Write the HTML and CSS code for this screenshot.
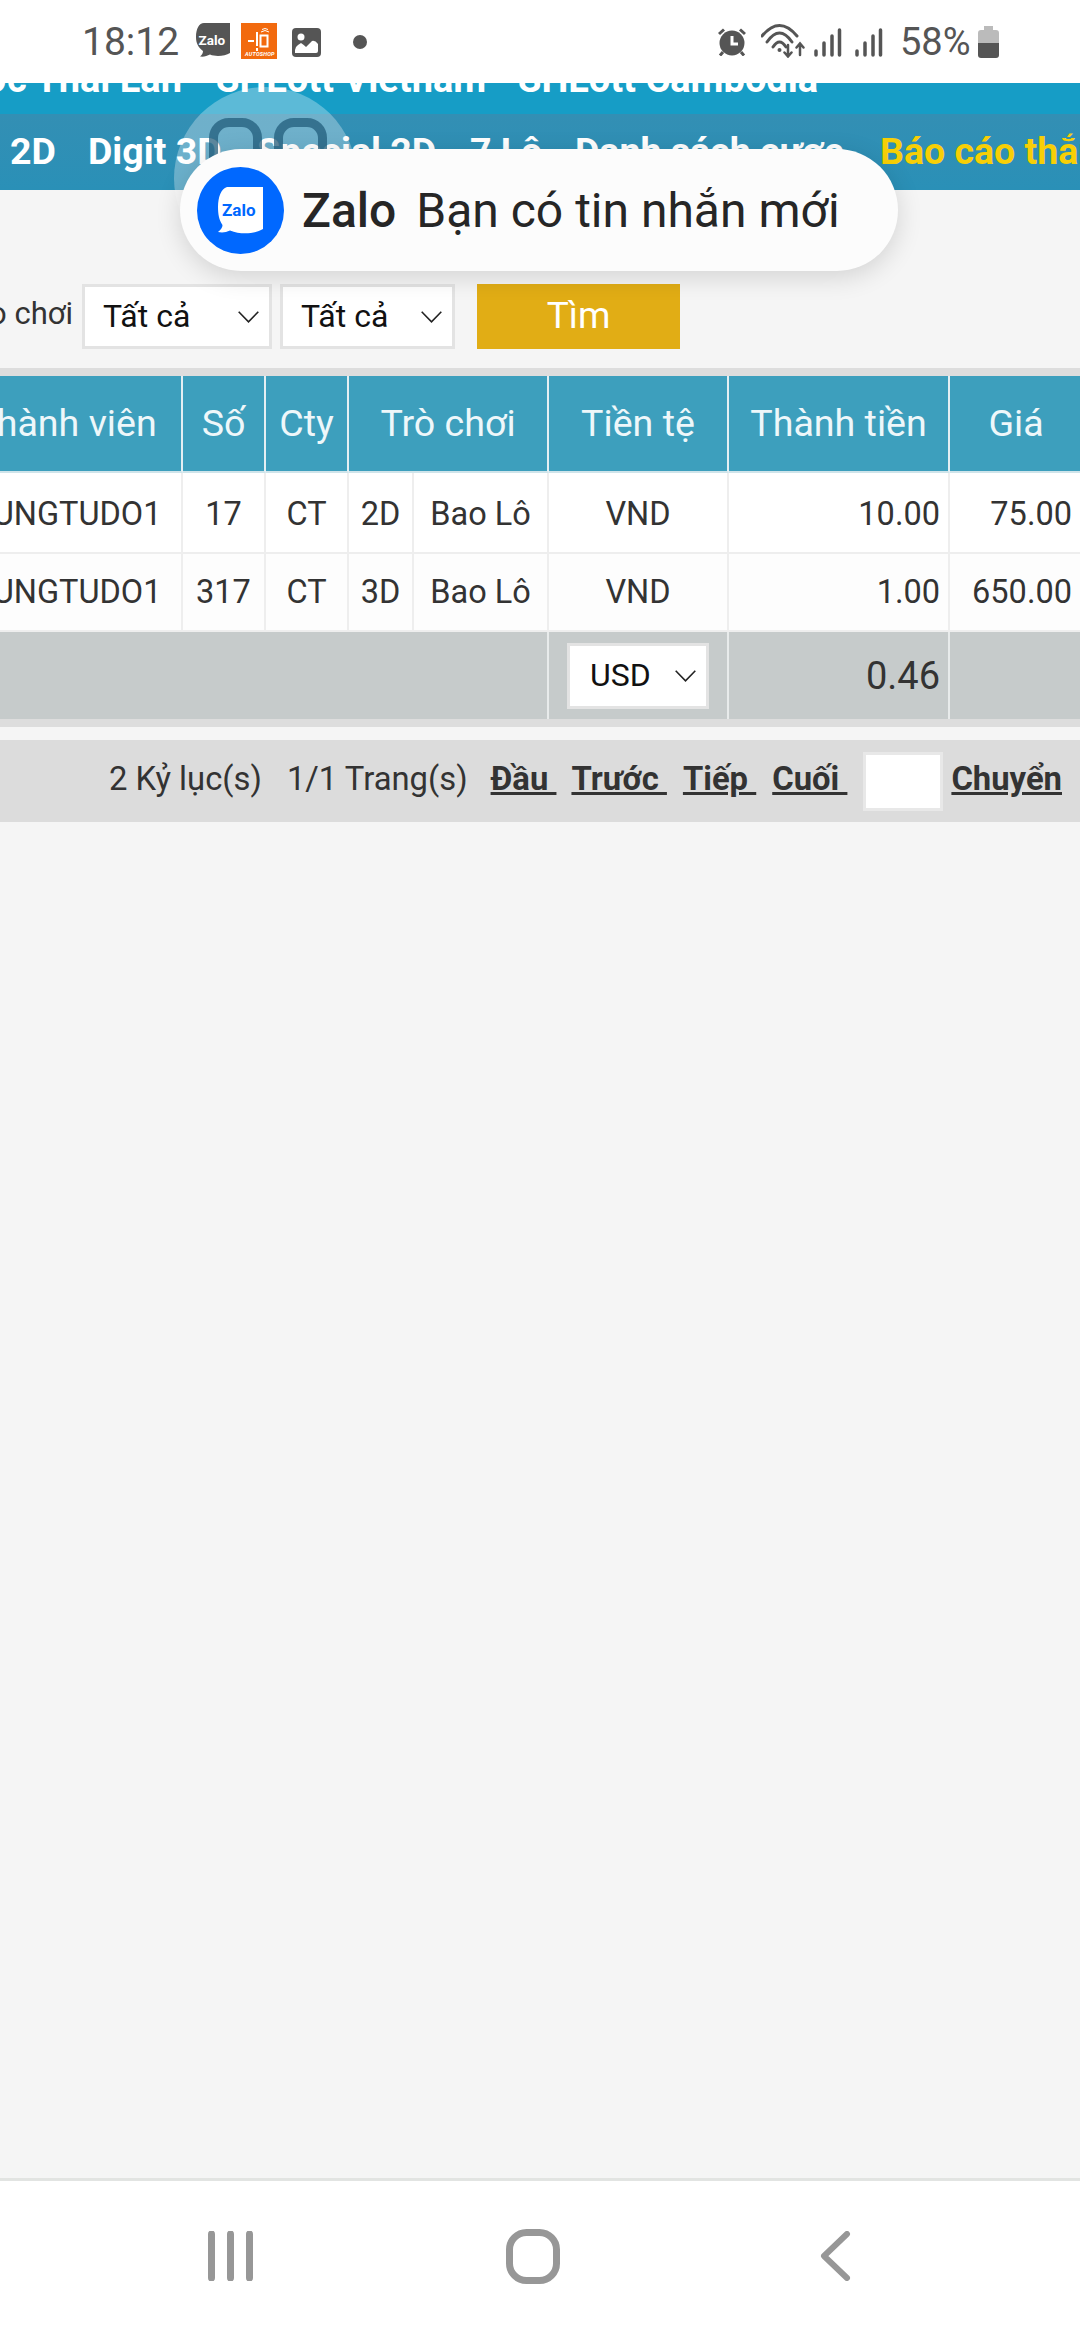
FILE: index.html
```html
<!DOCTYPE html>
<html lang="vi">
<head>
<meta charset="utf-8">
<title>Báo cáo thắng thua</title>
<link rel="stylesheet" href="styles.css">
</head>
<body>
<div class="screen">
  <header class="status">
    <span class="time">18:12</span>
    <svg class="ic-zalo" width="34" height="34" viewBox="0 0 34 34"><path fill="#555" d="M8 0H34V30C29 33 20 34 14 31.500C11 33 8 34 4 33.500C6 32 7 30 7 28C2 24 0 20 0 14C0 6 3 0 8 0Z"/><text x="2.500" y="21.500" class="t-zalo-s">Zalo</text></svg>
    <svg class="ic-auto" width="36" height="36" viewBox="0 0 36 36"><rect width="36" height="36" fill="#f26a0e"/><g stroke="#fff" fill="none"><path stroke-width="2" d="M7 18H13M16 9V23M16 25V28"/><rect x="19.500" y="12.500" width="7" height="11" stroke-width="2"/><path stroke-width="1" d="M20 9Q24 6 28 9M21 6.500Q24 4.500 27 6.500"/></g><text x="4" y="33" class="t-auto">AUTOSHOP</text></svg>
    <svg class="ic-img" width="29" height="29" viewBox="0 0 29 29"><rect width="29" height="29" rx="4" fill="#555"/><circle cx="9" cy="9" r="3.500" fill="#fff"/><path fill="#fff" d="M3 25V22Q3 19 6 17L9 15Q12 17 14 19L20 13Q23 12 26 16V23Q26 25 24 25Z"/></svg>
    <span class="dot"></span>
    <div class="status-right">
      <svg class="ic-alarm" width="30" height="28" viewBox="0 0 30 28"><g stroke="#555" stroke-width="3" fill="none"><path d="M2 6L7 1.500M23 1.500L28 6M6 24L3 27.500M24 24L27 27.500"/></g><circle cx="15" cy="15" r="12.500" fill="#555"/><path d="M15 8V16H21" stroke="#fff" stroke-width="3" fill="none"/></svg>
      <svg class="ic-wifi" width="44" height="34" viewBox="0 0 44 34"><g stroke="#555" fill="none" stroke-linecap="round"><path stroke-width="3" d="M1 12Q18.500 -9 36 12M6 18Q18.500 0 31 18M12 23Q18.500 13 25 23"/><path stroke-width="2.500" d="M27 21V32M23.500 28.500L27 32.500L30.500 28.500M39 31V20M35.500 23.500L39 19.500L42.500 23.500"/></g><circle cx="18.500" cy="26" r="2" fill="#555"/></svg>
      <svg class="ic-sig" width="28" height="29" viewBox="0 0 28 29"><path stroke="#555" stroke-width="3.500" stroke-linecap="round" d="M2 23V27M10 15V27M18 8V27M25.500 2V27"/></svg>
      <svg class="ic-sig ic-sig2" width="28" height="29" viewBox="0 0 28 29"><path stroke="#555" stroke-width="3.500" stroke-linecap="round" d="M2 23V27M10 15V27M18 8V27M25.500 2V27"/></svg>
      <span class="pct">58%</span>
      <svg class="ic-batt" width="21" height="32" viewBox="0 0 21 32"><path fill="#bbb" d="M6 0H15V4H18Q21 4 21 7V17H0V7Q0 4 3 4H6Z"/><path fill="#555" d="M0 17H21V29Q21 32 18 32H3Q0 32 0 29Z"/></svg>
    </div>
  </header>

  <main class="page">
    <nav class="menu-top">
      <span class="mt-a">Cược Thái Lan</span>
      <span class="mt-b">SHLott Vietnam</span>
      <span class="mt-c">SHLott Cambodia</span>
    </nav>
    <nav class="menu-main">
      <span class="mm-1">2D</span>
      <span class="mm-2">Digit 3D</span>
      <span class="mm-3">Special 2D</span>
      <span class="mm-4">7 Lô</span>
      <span class="mm-5">Danh sách cược</span>
      <span class="mm-6 active">Báo cáo thắng thua</span>
    </nav>

    <section class="filter">
      <div class="f-label"><span>Trò chơi</span></div>
      <div class="select sel-1"><span>Tất cả</span><svg class="chev" width="21" height="12" viewBox="0 0 21 12"><path d="M.7.7L10.500 10.800L20.300.7" fill="none" stroke="#222" stroke-width="1.600"/></svg></div>
      <div class="select sel-2"><span>Tất cả</span><svg class="chev" width="21" height="12" viewBox="0 0 21 12"><path d="M.7.7L10.500 10.800L20.300.7" fill="none" stroke="#222" stroke-width="1.600"/></svg></div>
      <button class="btn-find">Tìm</button>
    </section>

    <div class="table-wrap">
      <table class="report">
        <colgroup>
          <col class="c1"><col class="c2"><col class="c3"><col class="c4"><col class="c5"><col class="c6"><col class="c7"><col class="c8">
        </colgroup>
        <thead>
          <tr>
            <th>Thành viên</th><th>Số</th><th>Cty</th><th colspan="2">Trò chơi</th><th>Tiền tệ</th><th>Thành tiền</th><th>Giá</th>
          </tr>
        </thead>
        <tbody>
          <tr class="r1">
            <td>HUNGTUDO1</td><td>17</td><td>CT</td><td>2D</td><td>Bao Lô</td><td>VND</td><td class="num">10.00</td><td class="num">75.00</td>
          </tr>
          <tr class="r2">
            <td>HUNGTUDO1</td><td>317</td><td>CT</td><td>3D</td><td>Bao Lô</td><td>VND</td><td class="num">1.00</td><td class="num">650.00</td>
          </tr>
        </tbody>
        <tfoot>
          <tr>
            <td colspan="5"></td>
            <td><div class="select sel-cur"><span>USD</span><svg class="chev" width="21" height="12" viewBox="0 0 21 12"><path d="M.7.7L10.500 10.800L20.300.7" fill="none" stroke="#222" stroke-width="1.600"/></svg></div></td>
            <td class="num total">0.46</td>
            <td></td>
          </tr>
        </tfoot>
      </table>
    </div>

    <div class="pager">
      <span class="p-rec">2 Kỷ lục(s)</span>
      <span class="p-page">1/1 Trang(s)</span>
      <a class="p-link p-first">Đầu&nbsp;</a>
      <a class="p-link">Trước&nbsp;</a>
      <a class="p-link">Tiếp&nbsp;</a>
      <a class="p-link">Cuối&nbsp;</a>
      <span class="p-input"></span>
      <a class="p-link p-go">Chuyển</a>
    </div>
  </main>

  <footer class="navbar">
    <svg class="nav-recent" width="45" height="50" viewBox="0 0 45 50"><path d="M3.500 3V47M22.500 3V47M41.500 3V47" stroke="#979797" stroke-width="7" stroke-linecap="round"/></svg>
    <svg class="nav-home" width="54" height="55" viewBox="0 0 54 55"><rect x="3.500" y="3.500" width="47" height="48" rx="17" fill="none" stroke="#979797" stroke-width="7"/></svg>
    <svg class="nav-back" width="31" height="50" viewBox="0 0 31 50"><path d="M27 3L4 25L27 47" fill="none" stroke="#979797" stroke-width="6" stroke-linecap="round" stroke-linejoin="round"/></svg>
  </footer>

  <div class="bubble-ghost">
    <span class="ghost-sq sq-a"></span>
    <span class="ghost-sq sq-b"></span>
  </div>
  <div class="toast">
    <svg class="toast-icon" width="87" height="87" viewBox="0 0 87 87"><circle cx="43.500" cy="43.500" r="43.500" fill="#0068ff"/><path fill="#fff" d="M30 20H66V62C58 67 44 68 33 63.500C29 65.500 25 66 21 65C24 63 25.500 60 25.500 58C22 53 21 47 21 40C21 30 24 22 30 20Z"/><text x="25" y="48.500" class="t-zalo-l">Zalo</text></svg>
    <b class="toast-app">Zalo</b>
    <span class="toast-msg">Bạn có tin nhắn mới</span>
  </div>
</div>
</body>
</html>
```
FILE: styles.css
```css
* { box-sizing: border-box; }
html, body { margin: 0; padding: 0; }
body { width: 1080px; height: 2340px; overflow: hidden; font-family: Roboto, "Noto Sans", sans-serif; color: #333; }
.screen { position: relative; width: 1080px; height: 2340px; display: flex; flex-direction: column; background: #f5f5f5; overflow: hidden; }

/* status bar */
.status { flex: none; height: 83px; background: #fff; display: flex; align-items: center; padding: 0 81px 0 82px; color: #555; }
.status svg { display: block; flex: none; }
.time { font-size: 39px; line-height: 1; width: 96px; flex: none; margin-top: 1px; }
.ic-zalo { margin-left: 18px; margin-top: -3px; }
.ic-auto { margin-left: 11px; margin-top: -1px; }
.ic-img { margin-left: 15px; margin-top: 2px; }
.dot { width: 14px; height: 14px; border-radius: 50%; background: #555; margin-left: 32px; flex: none; }
.status-right { margin-left: auto; display: flex; align-items: center; }
.ic-alarm { margin-top: 1px; }
.ic-wifi { margin-left: 14px; margin-top: -1px; }
.ic-sig { margin-left: 9px; margin-top: 1px; }
.ic-sig2 { margin-left: 13px; }
.pct { font-size: 38px; line-height: 1; margin-left: 17px; width: 69px; white-space: nowrap; }
.ic-batt { margin-left: 9px; }
.t-zalo-s { font: 700 13.500px Roboto, sans-serif; fill: #fff; }
.t-auto { font: italic 700 5.500px Roboto, sans-serif; fill: #fff; letter-spacing: .2px; }
.t-zalo-l { font: 700 17px Roboto, sans-serif; fill: #0068ff; }

/* menus */
.page { flex: 1; min-height: 0; display: flex; flex-direction: column; overflow: hidden; }
.menu-top { flex: none; height: 31px; background: #169dc6; overflow: hidden; display: flex; align-items: flex-end; color: #fff; font-weight: 700; font-size: 38px; line-height: 40px; padding-bottom: 15px; white-space: nowrap; }
.menu-top span { flex: none; }
.mt-a { margin-left: -200px; width: 416px; padding-right: 34px; text-align: right; }
.mt-b { width: 302px; }
.menu-main { flex: none; height: 76px; background: linear-gradient(#338fb4, #2a90b7); display: flex; align-items: center; color: #fff; font-weight: 700; font-size: 37.500px; line-height: 48px; white-space: nowrap; overflow: hidden; padding-bottom: 3px; }
.menu-main span { flex: none; }
.mm-1 { margin-left: 10px; width: 78px; }
.mm-2 { width: 169px; }
.mm-3 { width: 213px; }
.mm-4 { width: 105px; }
.mm-5 { width: 305px; }
.active { color: #f7cf06; }

/* filter */
.filter { flex: none; display: flex; align-items: stretch; height: 65px; margin: 94px 0 19px; }
.f-label { width: 82px; flex: none; display: flex; justify-content: flex-end; align-items: center; padding: 0 9px 6px 0; white-space: nowrap; font-size: 31px; color: #333; overflow: hidden; }
.f-label span { flex: none; }
.select { display: flex; align-items: center; justify-content: space-between; background: #fff; border: 3px solid #e3e3e3; color: #111; font-size: 32px; flex: none; }
.select span { position: relative; top: -1px; }
.sel-1 { width: 190px; padding: 0 10px 0 18px; }
.sel-2 { width: 175px; margin-left: 8px; padding: 0 10px 0 18px; }
.btn-find { width: 203px; margin-left: 22px; border: 0; background: #e1ad15; color: #fff; font: 400 37px Roboto, sans-serif; padding: 0 0 3px; }

/* table */
.table-wrap { flex: none; overflow: hidden; border-top: 8px solid #ddd; border-bottom: 8px solid #ddd; }
.report { border-collapse: separate; border-spacing: 0; table-layout: fixed; width: 1132px; margin-left: -50px; }
.c1 { width: 233px; } .c2 { width: 83px; } .c3 { width: 83px; } .c4 { width: 65px; } .c5 { width: 135px; } .c6 { width: 180px; } .c7 { width: 221px; } .c8 { width: 132px; }
.report th { height: 97px; background: #3d9fbd; color: #eef7fa; font-weight: 400; font-size: 37.600px; padding: 0 0 2px; border-right: 2px solid #e4eff3; border-bottom: 2px solid #cfe4ea; white-space: nowrap; }
.report td { font-size: 32.500px; text-align: center; padding: 0; border-right: 2px solid #eee; border-bottom: 2px solid #eee; white-space: nowrap; color: #333; }
.r1 td { height: 81px; background: #fff; padding-top: 2px; }
.r2 td { height: 78px; background: #fdfdfd; }
.report th:last-child, .report td:last-child { border-right: 0; }
.report td.num { text-align: right; padding-right: 8px; }
.report td.num:last-child { padding-right: 10px; }
.report tfoot td { height: 87px; background: #c6cbcb; border-bottom: 0; border-right-color: #e8ebeb; vertical-align: middle; }
.sel-cur { width: 142px; height: 66px; margin: 0 0 0 18px; padding: 0 10px 0 20px; font-size: 32px; }
.report td.total { font-size: 38px; padding-right: 8px; }

/* pager */
.pager { flex: none; height: 82px; margin-top: 13px; background: #dcdcdc; display: flex; align-items: center; justify-content: flex-end; padding: 0 18px 0 0; font-size: 32.800px; color: #333; white-space: nowrap; }
.pager > span:not(.p-input), .p-link { position: relative; top: -2px; }
.p-rec { margin-right: 25px; }
.p-page { margin-right: 23px; }
.p-link { font-weight: 700; text-decoration: underline; margin-right: 16px; }
.p-first { margin-right: 15px; }
.p-input { width: 80px; height: 59px; background: #fff; border: 3px solid #e8e8e8; flex: none; margin-right: 8px; }
.p-go { margin-right: 0; }

/* navigation bar */
.navbar { flex: none; height: 162px; background: #fff; border-top: 3px solid #e2e4e2; display: flex; align-items: center; padding: 0 0 9px 208px; }
.navbar svg { display: block; flex: none; }
.nav-home { margin-left: 253px; }
.nav-back { margin-left: 260px; }

/* overlays */
.bubble-ghost { position: absolute; left: 174px; top: 87px; width: 183px; height: 183px; border-radius: 50%; background: rgba(255, 255, 255, .3); }
.ghost-sq { position: absolute; top: 31px; width: 53px; height: 90px; border: 9px solid rgba(30, 90, 120, .72); border-radius: 20px; }
.sq-a { left: 35px; }
.sq-b { left: 100px; }
.toast { position: absolute; left: 180px; top: 149px; width: 718px; height: 122px; border-radius: 61px; background: #fcfcfc; box-shadow: 0 6px 26px rgba(0, 0, 0, .14); display: flex; align-items: center; padding-left: 17px; color: #262626; white-space: nowrap; }
.toast-icon { flex: none; display: block; }
.toast-app { font-size: 48px; font-weight: 500; margin-left: 18px; }
.toast-msg { font-size: 48px; margin-left: 20px; }
```
